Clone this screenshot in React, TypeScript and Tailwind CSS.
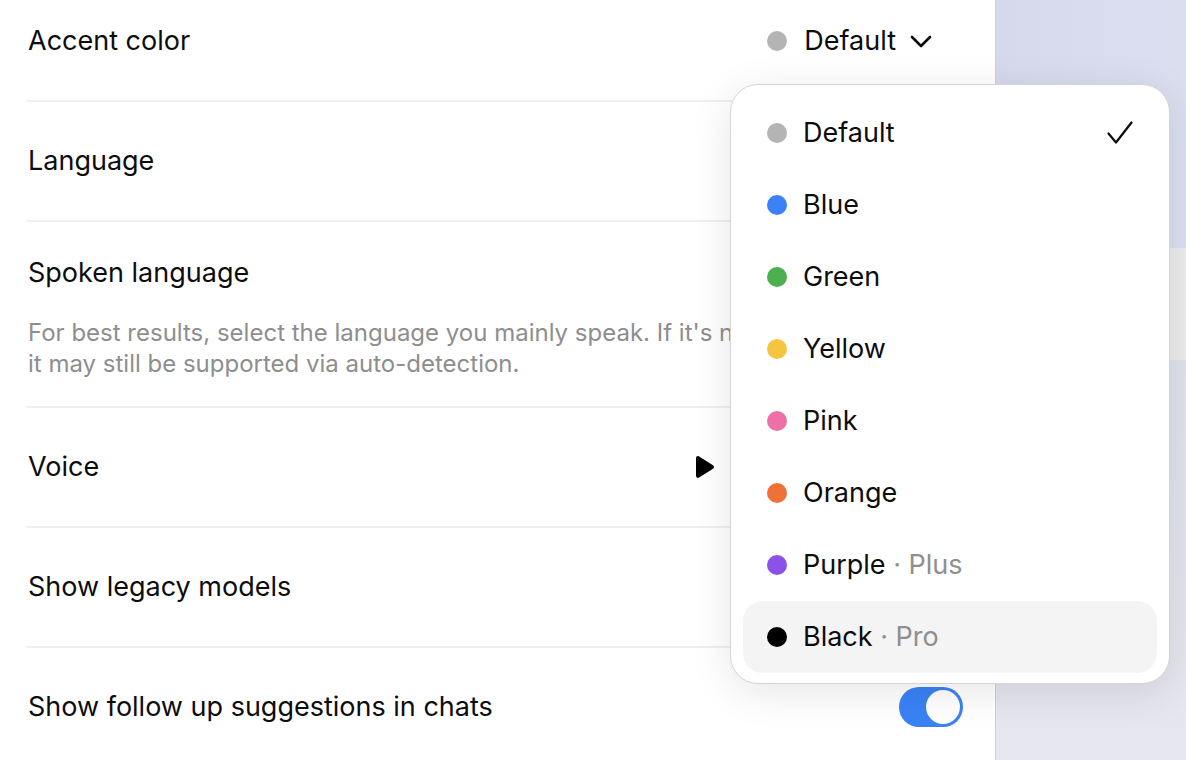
import React from 'react';

type Swatch = { name: string; color: string; tier?: string };

const swatches: Swatch[] = [
  { name: 'Default', color: '#b4b4b4' },
  { name: 'Blue', color: '#3a82f6' },
  { name: 'Green', color: '#4caf50' },
  { name: 'Yellow', color: '#f5c53f' },
  { name: 'Pink', color: '#ef6fa8' },
  { name: 'Orange', color: '#ee7137' },
  { name: 'Purple', color: '#8b52ea', tier: 'Plus' },
  { name: 'Black', color: '#000000', tier: 'Pro' },
];

function Dot({ color }: { color: string }) {
  return <span className="w-[20px] h-[20px] rounded-full shrink-0" style={{ backgroundColor: color }} />;
}

function Toggle() {
  return (
    <div className="w-[64px] h-[40px] rounded-full bg-[#3a82f6] flex items-center justify-end px-[3px]">
      <div className="w-[34px] h-[34px] rounded-full bg-white" />
    </div>
  );
}

function Divider() {
  return <div className="h-[2px] bg-[#f0f0f0] ml-[27px] mr-[32px]" />;
}

function Row({ label, children }: { label: string; children?: React.ReactNode }) {
  return (
    <div className="h-[118px] flex items-center justify-between pl-[28px] pr-[32px]">
      <span>{label}</span>
      {children}
    </div>
  );
}

function AccentMenu() {
  return (
    <div className="absolute left-[730px] top-[84px] w-[440px] h-[600px] rounded-[28px] bg-white border border-[#d4d4d4] shadow-[0_8px_40px_rgba(0,0,0,0.10)] p-[12px] flex flex-col">
      {swatches.map((s) => (
        <div
          key={s.name}
          className={`h-[72px] shrink-0 flex items-center rounded-[20px] pl-[24px] pr-[24px] ${s.name === 'Black' ? 'bg-[#f4f4f4]' : ''}`}
        >
          <Dot color={s.color} />
          <span className="ml-[16px] text-[#0d0d0d]">
            {s.name}
            {s.tier && <span className="text-[#8f8f8f]"> · {s.tier}</span>}
          </span>
          {s.name === 'Default' && (
            <svg width="26" height="24" viewBox="0 0 26 24" className="ml-auto" fill="none">
              <path d="M1.5 12.5 L9 21.5 L24.5 1.5" stroke="#0d0d0d" strokeWidth="2.2" strokeLinecap="round" strokeLinejoin="round" />
            </svg>
          )}
        </div>
      ))}
    </div>
  );
}

export default function App() {
  return (
    <div className="relative w-full h-[760px] overflow-hidden flex font-['Inter','Liberation_Sans',sans-serif] text-[27px] text-[#0d0d0d]">
      <div className="w-[996px] h-full bg-white border-r border-[#cfcfd4] shrink-0">
        <div className="-mt-[18px]">
          <Row label="Accent color">
            <div className="flex items-center mr-[31px]">
              <Dot color="#b4b4b4" />
              <span className="ml-[17px]">Default</span>
              <svg width="22" height="13" viewBox="0 0 22 13" className="ml-[14px]" fill="none">
                <path d="M2 2 L11 11 L20 2" stroke="#0d0d0d" strokeWidth="2.6" strokeLinecap="round" strokeLinejoin="round" />
              </svg>
            </div>
          </Row>
          <Divider />
          <Row label="Language" />
          <Divider />
          <div className="pl-[28px] pr-[32px] pt-[35px] pb-[27px]">
            <div className="leading-[32px] mb-[28px]">Spoken language</div>
            <p className="text-[24px] leading-[31px] text-[#8e8e8e] whitespace-nowrap">
              For best results, select the language you mainly speak. If it's not listed,
              <br />
              it may still be supported via auto-detection.
            </p>
          </div>
          <Divider />
          <Row label="Voice">
            <div className="flex items-center gap-4 mr-[248px]">
              <svg width="22" height="24" viewBox="0 0 22 24">
                <path d="M3 3.2 C3 1.5 4.7 0.6 6.1 1.4 L20 10.3 C21.3 11.1 21.3 12.9 20 13.7 L6.1 22.6 C4.7 23.4 3 22.5 3 20.8 Z" fill="#000" />
              </svg>
            </div>
          </Row>
          <Divider />
          <Row label="Show legacy models">
            <Toggle />
          </Row>
          <Divider />
          <Row label="Show follow up suggestions in chats">
            <Toggle />
          </Row>
        </div>
      </div>
      <div className="flex-1 flex flex-col">
        <div className="h-[248px] bg-gradient-to-r from-[#d5d9ec] to-[#dadff0]" />
        <div className="h-[112px] bg-[#ececed]" />
        <div className="flex-1 bg-gradient-to-b from-[#dfe1ec] to-[#e6e7ee]" />
      </div>
      <AccentMenu />
    </div>
  );
}
